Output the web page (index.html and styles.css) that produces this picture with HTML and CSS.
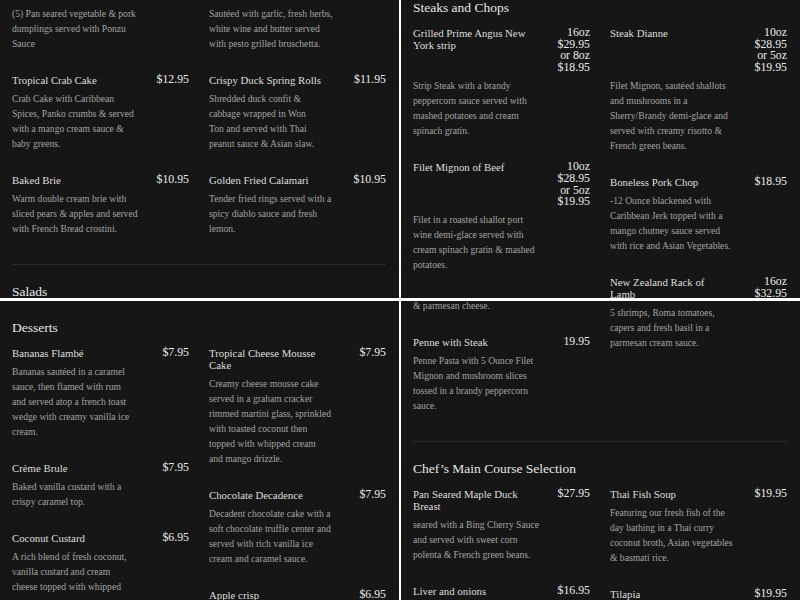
FILE: index.html
```html
<!DOCTYPE html>
<html lang="en">
<head>
<meta charset="utf-8">
<title>Menu</title>
<link rel="stylesheet" href="styles.css">
</head>
<body>
<div class="tiles">

  <div class="tile">
    <div class="menu menu-appetizers">
      <div class="section-body">
        <div class="col">
          <div class="item">
            <div class="item-head"><div class="item-title">Pot Stickers</div><div class="item-price">$8.95</div></div>
            <p class="item-desc">(5) Pan seared vegetable &amp; pork<br>dumplings served with Ponzu<br>Sauce</p>
          </div>
          <div class="item">
            <div class="item-head"><div class="item-title">Tropical Crab Cake</div><div class="item-price">$12.95</div></div>
            <p class="item-desc">Crab Cake with Caribbean<br>Spices, Panko crumbs &amp; served<br>with a mango cream sauce &amp;<br>baby greens.</p>
          </div>
          <div class="item">
            <div class="item-head"><div class="item-title">Baked Brie</div><div class="item-price">$10.95</div></div>
            <p class="item-desc">Warm double cream brie with<br>sliced pears &amp; apples and served<br>with French Bread crostini.</p>
          </div>
        </div>
        <div class="col">
          <div class="item">
            <div class="item-head"><div class="item-title">Garlic Mussels</div><div class="item-price">$11.95</div></div>
            <p class="item-desc">Sautéed with garlic, fresh herbs,<br>white wine and butter served<br>with pesto grilled bruschetta.</p>
          </div>
          <div class="item">
            <div class="item-head"><div class="item-title">Crispy Duck Spring Rolls</div><div class="item-price">$11.95</div></div>
            <p class="item-desc">Shredded duck confit &amp;<br>cabbage wrapped in Won<br>Ton and served with Thai<br>peanut sauce &amp; Asian slaw.</p>
          </div>
          <div class="item">
            <div class="item-head"><div class="item-title">Golden Fried Calamari</div><div class="item-price">$10.95</div></div>
            <p class="item-desc">Tender fried rings served with a<br>spicy diablo sauce and fresh<br>lemon.</p>
          </div>
        </div>
      </div>
      <hr class="divider">
      <h2 class="section-title">Salads</h2>
    </div>
  </div>

  <div class="tile">
    <div class="menu menu-steaks">
      <h2 class="section-title">Steaks and Chops</h2>
      <div class="section-body">
        <div class="col">
          <div class="item">
            <div class="item-head"><div class="item-title">Grilled Prime Angus New<br>York strip</div><div class="item-price">16oz<br>$29.95<br>or 8oz<br>$18.95</div></div>
            <p class="item-desc">Strip Steak with a brandy<br>peppercorn sauce served with<br>mashed potatoes and cream<br>spinach gratin.</p>
          </div>
          <div class="item">
            <div class="item-head"><div class="item-title">Filet Mignon of Beef</div><div class="item-price">10oz<br>$28.95<br>or 5oz<br>$19.95</div></div>
            <p class="item-desc">Filet in a roasted shallot port<br>wine demi-glace served with<br>cream spinach gratin &amp; mashed<br>potatoes.</p>
          </div>
        </div>
        <div class="col">
          <div class="item">
            <div class="item-head"><div class="item-title">Steak Dianne</div><div class="item-price">10oz<br>$28.95<br>or 5oz<br>$19.95</div></div>
            <p class="item-desc">Filet Mignon, sautéed shallots<br>and mushrooms in a<br>Sherry/Brandy demi-glace and<br>served with creamy risotto &amp;<br>French green beans.</p>
          </div>
          <div class="item">
            <div class="item-head"><div class="item-title">Boneless Pork Chop</div><div class="item-price">$18.95</div></div>
            <p class="item-desc">-12 Ounce blackened with<br>Caribbean Jerk topped with a<br>mango chutney sauce served<br>with rice and Asian Vegetables.</p>
          </div>
          <div class="item">
            <div class="item-head"><div class="item-title">New Zealand Rack of<br>Lamb</div><div class="item-price">16oz<br>$32.95</div></div>
          </div>
        </div>
      </div>
    </div>
  </div>

  <div class="tile">
    <div class="menu menu-desserts">
      <h2 class="section-title">Desserts</h2>
      <div class="section-body">
        <div class="col">
          <div class="item">
            <div class="item-head"><div class="item-title">Bananas Flambé</div><div class="item-price">$7.95</div></div>
            <p class="item-desc">Bananas sautéed in a caramel<br>sauce, then flamed with rum<br>and served atop a french toast<br>wedge with creamy vanilla ice<br>cream.</p>
          </div>
          <div class="item">
            <div class="item-head"><div class="item-title">Crème Brule</div><div class="item-price">$7.95</div></div>
            <p class="item-desc">Baked vanilla custard with a<br>crispy caramel top.</p>
          </div>
          <div class="item">
            <div class="item-head"><div class="item-title">Coconut Custard</div><div class="item-price">$6.95</div></div>
            <p class="item-desc">A rich blend of fresh coconut,<br>vanilla custard and cream<br>cheese topped with whipped</p>
          </div>
        </div>
        <div class="col">
          <div class="item">
            <div class="item-head"><div class="item-title">Tropical Cheese Mousse<br>Cake</div><div class="item-price">$7.95</div></div>
            <p class="item-desc">Creamy cheese mousse cake<br>served in a graham cracker<br>rimmed martini glass, sprinkled<br>with toasted coconut then<br>topped with whipped cream<br>and mango drizzle.</p>
          </div>
          <div class="item">
            <div class="item-head"><div class="item-title">Chocolate Decadence</div><div class="item-price">$7.95</div></div>
            <p class="item-desc">Decadent chocolate cake with a<br>soft chocolate truffle center and<br>served with rich vanilla ice<br>cream and caramel sauce.</p>
          </div>
          <div class="item">
            <div class="item-head"><div class="item-title">Apple crisp</div><div class="item-price">$6.95</div></div>
          </div>
        </div>
      </div>
    </div>
  </div>

  <div class="tile">
    <div class="menu menu-pasta">
      <div class="section-body">
        <div class="col">
          <div class="item">
            <div class="item-head"><div class="item-title">Fettuccine Alfredo</div><div class="item-price">$15.95</div></div>
            <p class="item-desc">Fettuccine pasta tossed in a<br>rich and creamy alfredo sauce<br>with grilled chicken, fresh<br>garlic, cracked black pepper<br>&amp; parmesan cheese.</p>
          </div>
          <div class="item">
            <div class="item-head"><div class="item-title">Penne with Steak</div><div class="item-price">19.95</div></div>
            <p class="item-desc">Penne Pasta with 5 Ounce Filet<br>Mignon and mushroom slices<br>tossed in a brandy peppercorn<br>sauce.</p>
          </div>
        </div>
        <div class="col">
          <div class="item">
            <div class="item-head"><div class="item-title">Linguine with Clam<br>Sauce</div><div class="item-price">$16.95</div></div>
            <p class="item-desc">Clams in a white wine sauce.</p>
          </div>
          <div class="item">
            <div class="item-head"><div class="item-title">Shrimp Romano</div><div class="item-price">$18.95</div></div>
            <p class="item-desc">5 shrimps, Roma tomatoes,<br>capers and fresh basil in a<br>parmesan cream sauce.</p>
          </div>
        </div>
      </div>
      <hr class="divider">
      <h2 class="section-title">Chef’s Main Course Selection</h2>
      <div class="section-body">
        <div class="col">
          <div class="item">
            <div class="item-head"><div class="item-title">Pan Seared Maple Duck<br>Breast</div><div class="item-price">$27.95</div></div>
            <p class="item-desc">seared with a Bing Cherry Sauce<br>and served with sweet corn<br>polenta &amp; French green beans.</p>
          </div>
          <div class="item">
            <div class="item-head"><div class="item-title">Liver and onions</div><div class="item-price">$16.95</div></div>
          </div>
        </div>
        <div class="col">
          <div class="item">
            <div class="item-head"><div class="item-title">Thai Fish Soup</div><div class="item-price">$19.95</div></div>
            <p class="item-desc">Featuring our fresh fish of the<br>day bathing in a Thai curry<br>coconut broth, Asian vegetables<br>&amp; basmati rice.</p>
          </div>
          <div class="item">
            <div class="item-head"><div class="item-title">Tilapia</div><div class="item-price">$19.95</div></div>
          </div>
        </div>
      </div>
    </div>
  </div>

</div>
</body>
</html>
```
FILE: styles.css
```css
html, body {
  margin: 0;
  padding: 0;
  background: #ffffff;
}

.tiles {
  display: grid;
  grid-template-columns: 399px 399px;
  grid-template-rows: 298px 299px;
  column-gap: 2px;
  row-gap: 3px;
  width: 800px;
  height: 600px;
}

.tile {
  background: #161616;
  overflow: hidden;
  font-family: "Liberation Serif", "DejaVu Serif", serif;
}

.menu {
  padding: 0 13px 0 12px;
}

.menu-appetizers { margin-top: -11px; }
.menu-steaks { padding-top: 0; }
.menu-desserts { padding-top: 19px; }
.menu-pasta { margin-top: -80px; }

.section-title {
  margin: 0 0 11px;
  font-size: 13.5px;
  line-height: 16px;
  font-weight: normal;
  color: #e6e6e6;
}

.section-body {
  display: flex;
  gap: 20px;
}

.col {
  width: 177px;
  display: flex;
  flex-direction: column;
  gap: 23.5px;
}

.item-head {
  display: flex;
  justify-content: space-between;
  align-items: flex-start;
  margin-bottom: 4.5px;
}

.item-title {
  font-size: 10.8px;
  line-height: 12px;
  color: #dedede;
  white-space: nowrap;
}

.item-price {
  font-size: 11.8px;
  line-height: 11.6px;
  color: #ececec;
  text-align: right;
  white-space: nowrap;
}

.item-desc {
  margin: 0;
  font-size: 9.6px;
  line-height: 15px;
  color: #a3a3a3;
  white-space: nowrap;
}

.divider {
  margin: 28.5px 0 19px;
  border: 0;
  border-top: 1px solid #2a2a2a;
  height: 0;
}
```
